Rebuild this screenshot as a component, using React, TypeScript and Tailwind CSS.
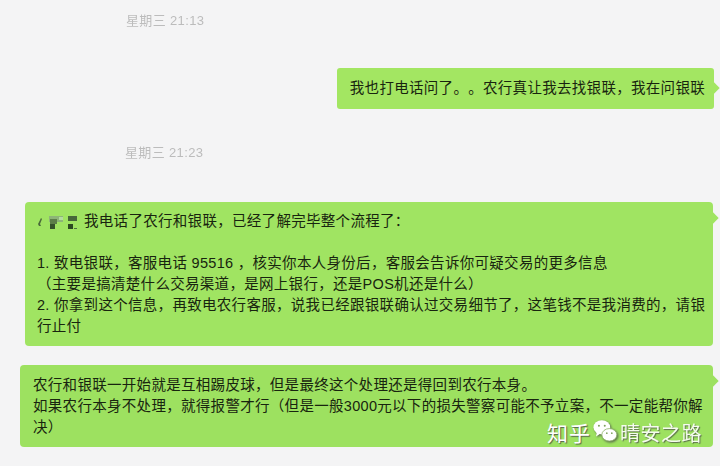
const cjk = "font-['Liberation_Sans','Noto_Sans_CJK_SC',sans-serif]";

function Time({ children, className }: { children: string; className: string }) {
  return <div className={`text-[13px] leading-[16px] text-[#bcbcbc] tracking-[0.35px] blur-[0.4px] ${className}`}>{children}</div>;
}

function Censored() {
  return (
    <svg width="41" height="16" viewBox="0 0 41 16" className="shrink-0 blur-[0.5px]">
      <path d="M1 10 L4 4 L5 5 L3 10 L4 12 L2 12 Z" fill="#4a6a3a" />
      <rect x="12" y="2" width="14" height="6" fill="#8db577" />
      <rect x="13" y="5" width="7" height="5" fill="#5c7f48" />
      <rect x="13" y="10" width="5" height="5" fill="#34522a" />
      <rect x="22" y="3" width="4" height="3" fill="#b3dc9f" />
      <rect x="31" y="2" width="9" height="5" fill="#47683a" />
      <rect x="31" y="10" width="5" height="5" fill="#2c4a20" />
      <rect x="37" y="14" width="3" height="1" fill="#4f7040" />
    </svg>
  );
}

function Watermark() {
  return (
    <div className="absolute left-[547px] top-[422px] flex items-center text-white [text-shadow:1px_1px_1px_#55624a]">
      <span className="text-[21px] leading-[24px] w-[45px] tracking-[1px]">知乎</span>
      <svg width="28" height="25" viewBox="0 0 32 30" className="-mt-[6px] shrink-0 drop-shadow-[1px_1px_1px_#55624a]">
        <ellipse cx="11" cy="10" rx="10" ry="8.5" fill="#fff" />
        <path d="M5 16 L4 21 L10 17 Z" fill="#fff" />
        <ellipse cx="20" cy="19" rx="9" ry="7.5" fill="#fff" stroke="#8fb46a" strokeWidth="1" />
        <circle cx="7.5" cy="8" r="1.2" fill="#7da35c" />
        <circle cx="14.5" cy="8" r="1.2" fill="#7da35c" />
        <circle cx="17" cy="17" r="1" fill="#7da35c" />
        <circle cx="23" cy="17" r="1" fill="#7da35c" />
      </svg>
      <span className="text-[20px] leading-[24px] tracking-[0.5px] opacity-90">晴安之路</span>
    </div>
  );
}

export default function App() {
  return (
    <div className={`relative h-[466px] w-[720px] overflow-hidden bg-[#f4f4f5] [text-spacing-trim:space-all] ${cjk}`}>
      <div className="flex flex-col pt-[13px] text-[14.5px] leading-[21px] text-[#18240f] tracking-[0.3px]">
        <Time className="ml-[126px]">星期三 21:13</Time>
        <div className="relative mr-[6px] mt-[39px] self-end rounded-[3px] bg-[#a3e662] pl-[13px] pr-[9px] py-[10px]">
          我也打电话问了。。农行真让我去找银联，我在问银联
          <span className="absolute -right-[4px] top-[16px] h-[8px] w-[8px] rotate-45 bg-[#a3e662]" />
        </div>
        <Time className="ml-[125px] mt-[36px]">星期三 21:23</Time>
        <div className="relative ml-[25px] mr-[7px] mt-[41px] rounded-[4px] bg-[#a0e462] pl-[12px] pr-[6px] pb-[9px] pt-[9px]">
          <div className="flex items-center gap-[6px]">
            <Censored />
            <span>我电话了农行和银联，已经了解完毕整个流程了：</span>
          </div>
          <div className="h-[21px]" />
          <div>1. 致电银联，客服电话 95516 ，核实你本人身份后，客服会告诉你可疑交易的更多信息</div>
          <div>（主要是搞清楚什么交易渠道，是网上银行，还是POS机还是什么）</div>
          <div>2. 你拿到这个信息，再致电农行客服，说我已经跟银联确认过交易细节了，这笔钱不是我消费的，请银</div>
          <div>行止付</div>
          <span className="absolute -right-[4px] top-[12px] h-[8px] w-[8px] rotate-45 bg-[#a0e462]" />
        </div>
        <div className="relative ml-[20px] mr-[7px] mt-[19px] rounded-[4px] bg-[#9de160] pl-[13px] pr-[6px] pb-[9px] pt-[10px]">
          <div>农行和银联一开始就是互相踢皮球，但是最终这个处理还是得回到农行本身。</div>
          <div>如果农行本身不处理，就得报警才行（但是一般3000元以下的损失警察可能不予立案，不一定能帮你解</div>
          <div>决）</div>
          <span className="absolute -right-[4px] top-[12px] h-[8px] w-[8px] rotate-45 bg-[#9de160]" />
        </div>
      </div>
      <Watermark />
    </div>
  );
}
